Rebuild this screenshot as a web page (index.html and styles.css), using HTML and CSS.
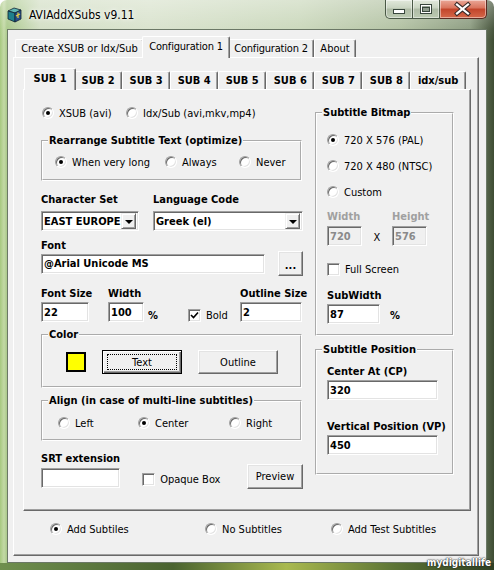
FILE: index.html
```html
<!DOCTYPE html>
<html>
<head>
<meta charset="utf-8">
<title>AVIAddXSubs v9.11</title>
<link rel="stylesheet" href="styles.css">
</head>
<body>
<div class="window">
  <div class="titlebar">
    <svg class="app-icon" viewBox="0 0 15 16" width="15" height="16">
      <polygon points="1,4 7,1 14,3 8,6" fill="#5fb7b4" stroke="#123" stroke-width="0.8"/>
      <polygon points="1,4 8,6 8,15 1,12" fill="#1f7f8c" stroke="#123" stroke-width="0.8"/>
      <polygon points="8,6 14,3 14,12 8,15" fill="#2a4f8a" stroke="#123" stroke-width="0.8"/>
      <path d="M9 9 L13 7 M11 5.5 L11 11" stroke="#e8d040" stroke-width="1.2"/>
    </svg>
    <span class="title">AVIAddXSubs v9.11</span>
    <div class="caption-buttons">
      <div class="cap cap-min">
        <svg width="26" height="18" viewBox="0 0 26 18"><rect x="7.5" y="9.5" width="11" height="4" fill="#fff" stroke="#38463c" stroke-width="1"/></svg>
      </div>
      <div class="cap cap-max">
        <svg width="26" height="18" viewBox="0 0 26 18"><rect x="7.5" y="4.5" width="11" height="9" fill="#9aa898" stroke="#38463c" stroke-width="1"/><rect x="8.5" y="5.5" width="9" height="7" fill="none" stroke="#fff" stroke-width="1"/><rect x="9.5" y="7.5" width="7" height="4" fill="#8e9c8c" stroke="#38463c" stroke-width="1"/></svg>
      </div>
      <div class="cap cap-close">
        <svg width="46" height="18" viewBox="0 0 46 18"><path d="M17 4.5 L28 13.5 M28 4.5 L17 13.5" stroke="#3a2a28" stroke-width="4.2" stroke-linecap="square"/><path d="M17 4.5 L28 13.5 M28 4.5 L17 13.5" stroke="#fff" stroke-width="2.2" stroke-linecap="square"/></svg>
      </div>
    </div>
  </div>

  <div class="client">
    <div class="tabstrip outer-strip">
      <div class="tab otab t-create">Create XSUB or Idx/Sub</div>
      <div class="tab otab t-conf active">Configuration 1</div>
      <div class="tab otab t-conf">Configuration 2</div>
      <div class="tab otab t-about">About</div>
    </div>
    <div class="panel outer-panel">
      <div class="tabstrip inner-strip">
        <div class="tab stab active">SUB 1</div>
        <div class="tab stab">SUB 2</div>
        <div class="tab stab">SUB 3</div>
        <div class="tab stab">SUB 4</div>
        <div class="tab stab">SUB 5</div>
        <div class="tab stab">SUB 6</div>
        <div class="tab stab">SUB 7</div>
        <div class="tab stab">SUB 8</div>
        <div class="tab stab">idx/sub</div>
      </div>
      <div class="panel inner-panel">
        <div class="col-left">
          <div class="row radio-row first-row">
            <div class="opt w-xsub"><span class="rb on"></span>XSUB (avi)</div>
            <div class="opt"><span class="rb"></span>Idx/Sub (avi,mkv,mp4)</div>
          </div>

          <div class="group g-rearrange">
            <div class="legend">Rearrange Subtitle Text (optimize)</div>
            <div class="row radio-row r-rearrange">
              <div class="opt w-long"><span class="rb on"></span>When very long</div>
              <div class="opt w-always"><span class="rb"></span>Always</div>
              <div class="opt"><span class="rb"></span>Never</div>
            </div>
          </div>

          <div class="row combo-row">
            <div class="stack charset">
              <div class="lbl">Character Set</div>
              <div class="field combo">EAST EUROPE<span class="drop"><span class="tri"></span></span></div>
            </div>
            <div class="stack lang">
              <div class="lbl">Language Code</div>
              <div class="field combo">Greek (el)<span class="drop"><span class="tri"></span></span></div>
            </div>
          </div>

          <div class="lbl font-lbl">Font</div>
          <div class="row font-row">
            <div class="field font-field">@Arial Unicode MS</div>
            <div class="btn dots">...</div>
          </div>

          <div class="row size-row">
            <div class="stack b-size">
              <div class="lbl">Font Size</div>
              <div class="field f-size">22</div>
            </div>
            <div class="stack b-width">
              <div class="lbl">Width</div>
              <div class="row">
                <div class="field f-width">100</div>
                <span class="pct">%</span>
              </div>
            </div>
            <div class="stack b-bold">
              <div class="opt chk-opt"><span class="cb"><svg width="9" height="9" viewBox="0 0 9 9"><path d="M1 4 L3.5 6.5 L8 1.5" fill="none" stroke="#000" stroke-width="1.6"/></svg></span>Bold</div>
            </div>
            <div class="stack b-outline">
              <div class="lbl">Outline Size</div>
              <div class="field f-outline">2</div>
            </div>
          </div>

          <div class="group g-color">
            <div class="legend">Color</div>
            <div class="row color-row">
              <span class="swatch"></span>
              <div class="btn btn-color default"><span class="focus">Text</span></div>
              <div class="btn btn-color">Outline</div>
            </div>
          </div>

          <div class="group g-align">
            <div class="legend">Align (in case of multi-line subtitles)</div>
            <div class="row radio-row r-align">
              <div class="opt w-left"><span class="rb"></span>Left</div>
              <div class="opt w-center"><span class="rb on"></span>Center</div>
              <div class="opt"><span class="rb"></span>Right</div>
            </div>
          </div>

          <div class="row srt-row">
            <div class="stack">
              <div class="lbl">SRT extension</div>
              <div class="field f-srt"></div>
            </div>
            <div class="opt chk-opt opaque"><span class="cb"></span>Opaque Box</div>
            <div class="btn preview">Preview</div>
          </div>
        </div>

        <div class="col-right">
          <div class="group g-bitmap">
            <div class="legend">Subtitle Bitmap</div>
            <div class="opt bm-opt bm-first"><span class="rb on"></span>720 X 576 (PAL)</div>
            <div class="opt bm-opt"><span class="rb"></span>720 X 480 (NTSC)</div>
            <div class="opt bm-opt"><span class="rb"></span>Custom</div>
            <div class="dims">
              <div class="lbl dis">Width</div>
              <div></div>
              <div class="lbl dis">Height</div>
              <div class="field f-dim dis-field">720</div>
              <div class="times">X</div>
              <div class="field f-dim dis-field">576</div>
            </div>
            <div class="opt chk-opt full"><span class="cb"></span>Full Screen</div>
            <div class="lbl subw-lbl">SubWidth</div>
            <div class="row subw-row">
              <div class="field f-subw">87</div>
              <span class="pct pct-subw">%</span>
            </div>
          </div>

          <div class="group g-pos">
            <div class="legend">Subtitle Position</div>
            <div class="lbl pos-lbl1">Center At (CP)</div>
            <div class="field f-pos">320</div>
            <div class="lbl pos-lbl2">Vertical Position (VP)</div>
            <div class="field f-pos">450</div>
          </div>
        </div>
      </div>

      <div class="row radio-row bottom-radios">
        <div class="opt w-add"><span class="rb on"></span>Add Subtiles</div>
        <div class="opt w-no"><span class="rb"></span>No Subtitles</div>
        <div class="opt"><span class="rb"></span>Add Test Subtitles</div>
      </div>
    </div>
  </div>
  <span class="watermark">mydigitallife</span>
</div>
</body>
</html>
```

FILE: styles.css
```css
* { box-sizing: border-box; }

body {
  margin: 0;
  background: #ffffff;
  font-family: "DejaVu Sans Condensed", "DejaVu Sans", sans-serif;
  font-size: 11px;
  line-height: 13px;
  color: #000;
}

.window {
  position: relative;
  width: 494px;
  height: 570px;
  display: flex;
  flex-direction: column;
  border-radius: 7px 7px 0 0;
  overflow: hidden;
  background:
    linear-gradient(to right, #6f8f4e 0%, #4a6330 35%, #a9b94f 58%, #5c7436 80%, #2f3f22 100%) bottom / 100% 7px no-repeat,
    linear-gradient(to bottom, rgba(255,255,255,0.35) 0px, rgba(255,255,255,0.05) 29px, rgba(255,255,255,0) 40px),
    linear-gradient(to right, #a6c87f 0px, #c3d9a6 4px, #a9c889 7px, #d2dec4 40px, #d8e2cc 150px, #c9d7ba 300px, #b0c0a0 400px, #8a9a7e 470px, #3e4c33 494px);
}

/* ---------- title bar ---------- */
.titlebar {
  height: 29px;
  display: flex;
  align-items: flex-start;
}
.app-icon {
  margin: 7px 0 0 7px;
  flex: none;
}
.title {
  margin: 8px 0 0 7px;
  font-size: 12px;
  line-height: 14px;
  color: #000;
  text-shadow: 0 0 6px rgba(255,255,255,0.95), 0 0 3px rgba(255,255,255,0.9);
}
.caption-buttons {
  margin-left: auto;
  margin-right: 7px;
  display: flex;
}
.cap {
  height: 19px;
  border: 1px solid #4a5946;
  border-top: none;
  display: flex;
  align-items: center;
  justify-content: center;
  box-shadow: inset 0 0 0 1px rgba(255,255,255,0.45);
}
.cap-min {
  width: 28px;
  border-radius: 0 0 0 5px;
  background: linear-gradient(#e2e9dc 0%, #c9d4c1 45%, #aebba5 50%, #bccab2 100%);
}
.cap-max {
  width: 27px;
  border-left: none;
  background: linear-gradient(#e2e9dc 0%, #c9d4c1 45%, #aebba5 50%, #bccab2 100%);
}
.cap-close {
  width: 47px;
  border-left: none;
  border-color: #5b2a22;
  border-radius: 0 0 5px 0;
  background: linear-gradient(#eaa898 0%, #d9735c 45%, #c2442a 50%, #d5684a 100%);
}

/* ---------- client ---------- */
.client {
  flex: 1;
  margin: 0 7px 7px 7px;
  background: #f0f0f0;
  border: 1px solid #6b7866;
  padding: 6px 0 0 5px;
}

.tabstrip {
  display: flex;
  align-items: flex-end;
  position: relative;
  z-index: 1;
}
.outer-strip {
  height: 21px;
  padding-left: 2px;
}
.tab {
  height: 18px;
  padding: 0 6px;
  display: flex;
  align-items: center;
  white-space: nowrap;
  background: #f0f0f0;
  border-top: 1px solid #fff;
  border-left: 1px solid #fff;
  border-right: 1px solid #696969;
  border-radius: 2px 2px 0 0;
  box-shadow: inset -1px 0 0 #a0a0a0;
}
.otab {
  padding: 0;
  justify-content: center;
}
.t-create { width: 129px; }
.t-conf { width: 86px; letter-spacing: -0.2px; }
.t-about { width: 42px; }
.tab.active {
  height: 22px;
  margin: 0 -2px -1px -2px;
  padding: 0 7px 2px 7px;
  z-index: 2;
}
.otab.active {
  width: 88px;
  padding: 0 0 2px 0;
}
.inner-strip {
  height: 21px;
  padding-left: 3px;
}
.stab {
  font-weight: bold;
  padding: 0 6.5px;
}
.stab.active {
  padding: 0 8.5px 3px 8.5px;
}

.panel {
  background: #f0f0f0;
  border: 1px solid;
  border-color: #fff #696969 #696969 #fff;
  box-shadow: inset -1px -1px 0 #a0a0a0;
}
.outer-panel {
  width: 466px;
  height: 499px;
  padding: 10px 0 0 9px;
}
.inner-panel {
  width: 448px;
  height: 422px;
  display: flex;
  padding-left: 17px;
}

/* ---------- generic controls ---------- */
.row { display: flex; align-items: center; }
.stack { display: flex; flex-direction: column; }
.lbl { font-weight: bold; white-space: nowrap; }
.lbl.dis { color: #a0a0a0; }

.opt {
  display: flex;
  align-items: center;
  height: 14px;
  white-space: nowrap;
}
.rb {
  width: 12px;
  height: 12px;
  flex: none;
  margin-right: 5px;
  border-radius: 50%;
  border: 1px solid;
  border-color: #a0a0a0 #ffffff #ffffff #a0a0a0;
  background: #fff;
  box-shadow: inset 1px 1px 0 #696969, inset -1px -1px 0 #e3e3e3;
  display: flex;
  align-items: center;
  justify-content: center;
}
.rb.on::after {
  content: "";
  width: 4px;
  height: 4px;
  border-radius: 50%;
  background: #000;
}
.cb {
  width: 13px;
  height: 13px;
  flex: none;
  margin-right: 5px;
  border: 1px solid;
  border-color: #a0a0a0 #ffffff #ffffff #a0a0a0;
  background: #fff;
  box-shadow: inset 1px 1px 0 #696969, inset -1px -1px 0 #e3e3e3;
  display: flex;
  align-items: center;
  justify-content: center;
}

.field {
  height: 20px;
  border: 1px solid;
  border-color: #a0a0a0 #ffffff #ffffff #a0a0a0;
  box-shadow: inset 1px 1px 0 #696969, inset -1px -1px 0 #e3e3e3;
  background: #fff;
  font-weight: bold;
  padding-left: 2px;
  display: flex;
  align-items: center;
  white-space: nowrap;
  overflow: hidden;
}
.dis-field { background: #f0f0f0; color: #8a8a8a; }

.combo { padding-right: 2px; }
.drop {
  margin-left: auto;
  width: 15px;
  height: 16px;
  flex: none;
  background: #f0f0f0;
  border: 1px solid;
  border-color: #f0f0f0 #696969 #696969 #f0f0f0;
  box-shadow: inset 1px 1px 0 #fff, inset -1px -1px 0 #a0a0a0;
  display: flex;
  align-items: center;
  justify-content: center;
}
.tri {
  width: 0;
  height: 0;
  border-left: 4px solid transparent;
  border-right: 4px solid transparent;
  border-top: 4px solid #000;
  margin-top: 1px;
}

.btn {
  background: #f0f0f0;
  border: 1px solid;
  border-color: #ffffff #696969 #696969 #ffffff;
  box-shadow: inset -1px -1px 0 #a0a0a0, inset 1px 1px 0 #e3e3e3;
  display: flex;
  align-items: center;
  justify-content: center;
  white-space: nowrap;
}
.btn.default {
  border-color: #000;
  box-shadow: inset 1px 1px 0 #fff, inset -1px -1px 0 #696969, inset -2px -2px 0 #a0a0a0;
}
.focus {
  align-self: stretch;
  flex: 1;
  margin: 3px 4px;
  border: 1px dotted #000;
  display: flex;
  align-items: center;
  justify-content: center;
}

.group {
  border: 2px groove #ffffff;
  display: flex;
  flex-direction: column;
}
.legend {
  margin: -8px 0 0 5px;
  padding: 0 1px;
  align-self: flex-start;
  background: #f0f0f0;
  font-weight: bold;
  white-space: nowrap;
}

/* ---------- left column ---------- */
.col-left {
  width: 262px;
  padding-top: 16px;
  display: flex;
  flex-direction: column;
}
.first-row { padding-left: 1px; }
.w-xsub { width: 84px; }

.g-rearrange {
  width: 261px;
  margin-top: 20px;
  padding-bottom: 10px;
}
.r-rearrange { margin: 8px 0 0 12px; }
.w-long { width: 110px; }
.w-always { width: 74px; }

.combo-row { margin-top: 12px; align-items: flex-start; }
.combo-row .field { margin-top: 5px; }
.charset { width: 113px; }
.charset .field { width: 98px; }
.lang { width: 150px; }
.lang .field { width: 150px; }

.font-lbl { margin-top: 8px; }
.font-row { margin-top: -1px; height: 25px; }
.font-field { width: 224px; }
.dots { width: 25px; height: 25px; margin-left: 13px; font-weight: bold; padding-top: 3px; }

.size-row { margin-top: 11px; align-items: flex-start; }
.size-row .field { margin-top: 2px; }
.b-size { width: 67px; }
.f-size { width: 48px; }
.b-width { width: 80px; }
.f-width { width: 36px; }
.pct { font-weight: bold; margin: 8px 0 0 4px; }
.b-bold { width: 52px; padding-top: 21px; }
.b-outline { width: 62px; }
.f-outline { width: 62px; }

.g-color {
  width: 261px;
  margin-top: 12px;
  padding-bottom: 12px;
}
.color-row { margin: 9px 0 0 23px; }
.swatch {
  width: 20px;
  height: 20px;
  border: 2px solid #000;
  background: #ffff00;
  flex: none;
}
.btn-color { width: 80px; height: 24px; margin-left: 16px; }

.g-align {
  width: 261px;
  margin-top: 12px;
  padding-bottom: 9px;
}
.r-align { margin: 9px 0 0 15px; }
.w-left { width: 80px; }
.w-center { width: 91px; }

.srt-row { margin-top: 11px; align-items: flex-end; }
.f-srt { width: 79px; margin-top: 3px; }
.opaque { margin: 0 0 2px 22px; height: 13px; }
.preview { width: 56px; height: 25px; margin: 0 0 -1px auto; }

/* ---------- right column ---------- */
.col-right {
  width: 139px;
  margin-left: 12px;
  padding-top: 22px;
  display: flex;
  flex-direction: column;
}
.g-bitmap {
  padding: 0 0 10px 10px;
}
.bm-opt { margin-top: 12px; }
.bm-first { margin-top: 14px; }
.g-bitmap .legend { margin-left: -5px; }
.dims {
  margin-top: 11px;
  display: grid;
  grid-template-columns: 35px 30px 35px;
  row-gap: 3px;
}
.f-dim { width: 35px; }
.times { text-align: center; align-self: end; margin-bottom: 2px; }
.full { margin-top: 17px; height: 13px; }
.subw-lbl { margin-top: 13px; }
.subw-row { margin-top: 2px; }
.f-subw { width: 53px; }
.pct-subw { margin: 2px 0 0 10px; }

.g-pos {
  margin-top: 13px;
  padding: 0 0 18px 10px;
}
.g-pos .legend { margin-left: -5px; }
.pos-lbl1 { margin-top: 9px; }
.pos-lbl2 { margin-top: 20px; }
.f-pos { width: 111px; margin-top: 2px; }

/* ---------- bottom ---------- */
.bottom-radios {
  margin-top: 11px;
  padding-left: 27px;
}
.w-add { width: 155px; }
.w-no { width: 126px; }

.watermark {
  position: absolute;
  right: 3px;
  bottom: 1px;
  font-size: 10px;
  line-height: 12px;
  font-weight: bold;
  color: #fff;
  text-shadow: 0 0 1px #000, 0 0 2px #333;
}
```
